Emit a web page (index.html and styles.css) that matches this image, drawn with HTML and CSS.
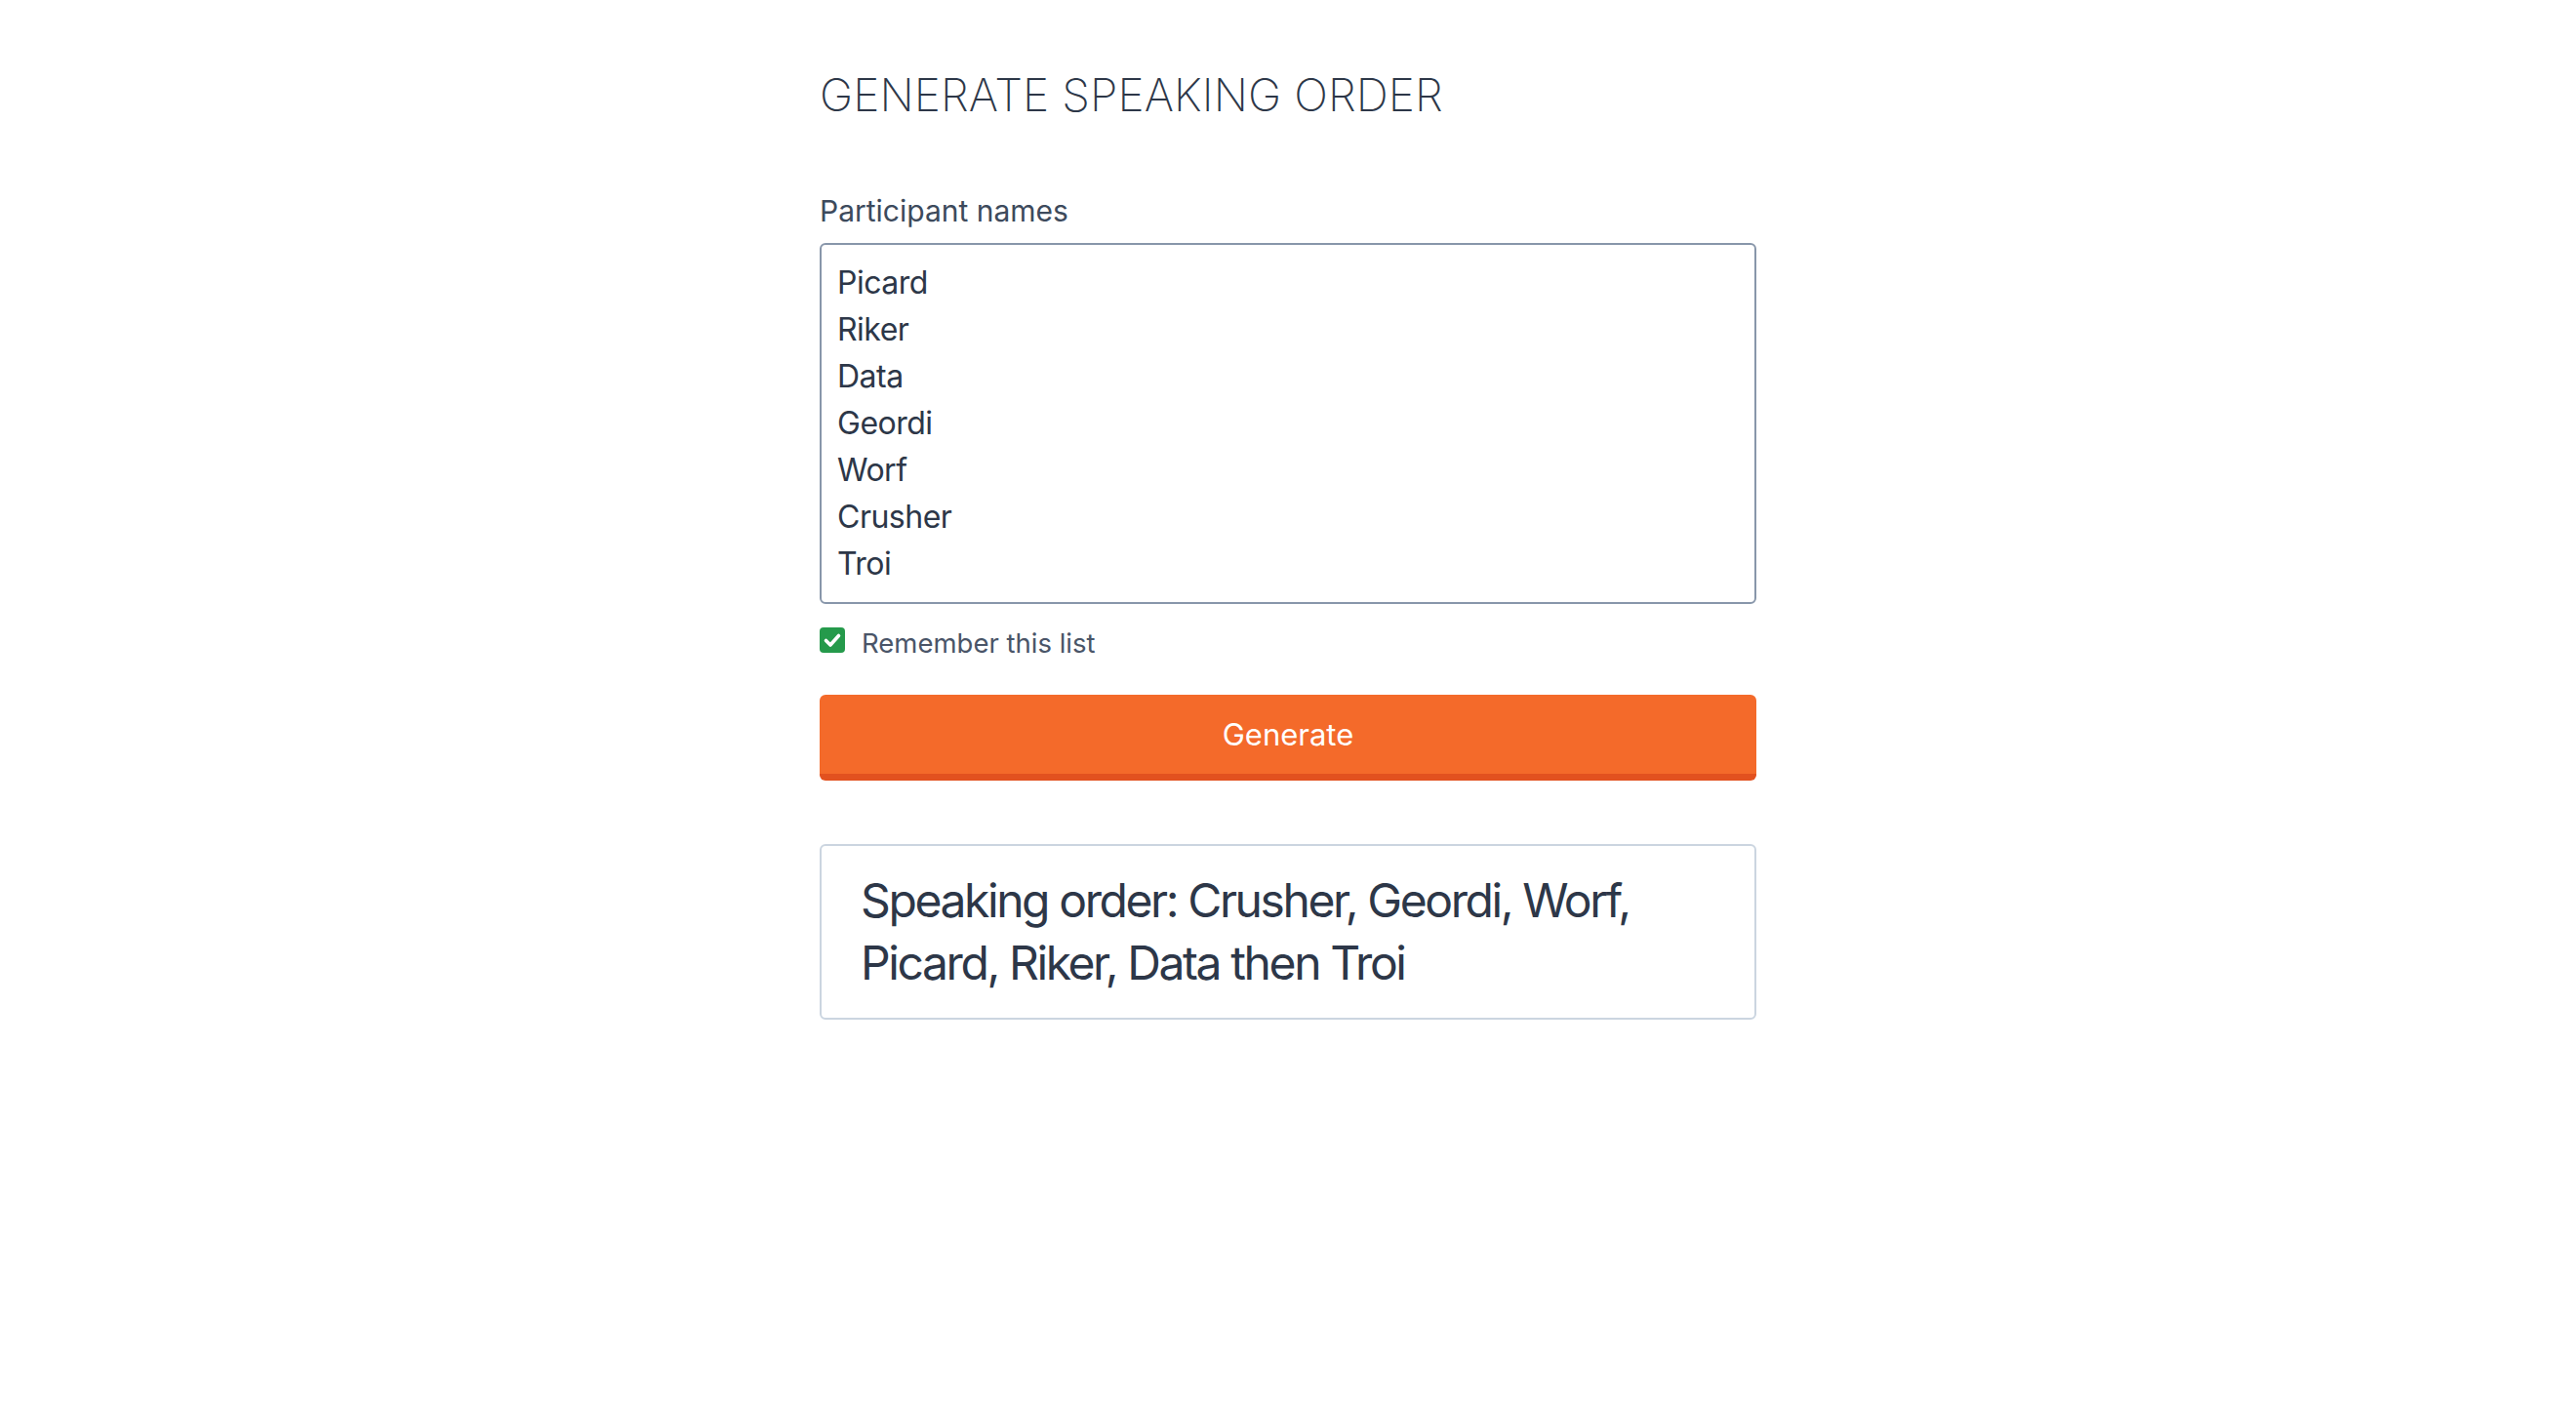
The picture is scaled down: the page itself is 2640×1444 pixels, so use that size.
FILE: index.html
```html
<!DOCTYPE html>
<html lang="en">
<head>
<meta charset="utf-8">
<title>Generate speaking order</title>
<link rel="stylesheet" href="styles.css">
</head>
<body>
<main class="page">
  <h1 class="title">GENERATE SPEAKING ORDER</h1>
  <form class="form">
    <label class="field-label" for="names">Participant names</label>
    <textarea id="names" class="names">Picard
Riker
Data
Geordi
Worf
Crusher
Troi</textarea>
    <label class="remember">
      <span class="checkbox" aria-hidden="true">
        <svg viewBox="0 0 26 26" width="26" height="26">
          <rect x="0" y="0" width="26" height="26" rx="4" fill="#259a4b"/>
          <path d="M6.5 13.5 L11 18 L19.5 8.5" fill="none" stroke="#fff" stroke-width="3.6" stroke-linecap="round" stroke-linejoin="round"/>
        </svg>
      </span>
      <span class="remember-text">Remember this list</span>
    </label>
    <button type="button" class="generate">Generate</button>
  </form>
  <div class="result">Speaking order: Crusher, Geordi, Worf, Picard, Riker, Data then Troi</div>
</main>
</body>
</html>
```
FILE: styles.css
```css
html, body {
  margin: 0;
  padding: 0;
  background: #ffffff;
}

body {
  font-family: Inter, "Noto Sans", "Liberation Sans", sans-serif;
  color: #2d3748;
}

.page {
  width: 960px;
  margin: 0 auto;
  padding-top: 68px;
}

.title {
  margin: 0 0 72px;
  font-size: 46px;
  line-height: 58px;
  font-weight: 200;
  color: #2d3748;
  letter-spacing: 0.1px;
}

.form {
  display: flex;
  flex-direction: column;
}

.field-label {
  display: block;
  font-size: 30px;
  line-height: 36px;
  color: #3d4a5c;
  margin-bottom: 14.5px;
}

.names {
  box-sizing: border-box;
  width: 100%;
  height: 370px;
  margin: 0;
  padding: 15px 16px;
  border: 2px solid #8896aa;
  border-radius: 6px;
  font-family: inherit;
  font-size: 32px;
  line-height: 48px;
  letter-spacing: -0.5px;
  color: #2d3748;
  resize: none;
  overflow: hidden;
  background: #fff;
}

.remember {
  display: flex;
  align-items: flex-start;
  gap: 17px;
  margin-top: 24px;
  font-size: 27.5px;
  line-height: 32px;
  color: #4a5568;
}

.checkbox {
  display: block;
  width: 26px;
  height: 26px;
  flex: none;
}

.checkbox svg {
  display: block;
}

.generate {
  box-sizing: border-box;
  width: 100%;
  height: 88px;
  margin-top: 37px;
  padding: 0;
  border: none;
  border-bottom: 7px solid #e2511f;
  border-radius: 6px;
  background: #f46a2a;
  color: #ffffff;
  font-family: inherit;
  font-size: 31px;
  cursor: pointer;
}

.result {
  margin-top: 65px;
  padding: 24px 40px;
  border: 2px solid #cbd5e0;
  border-radius: 6px;
  font-size: 48px;
  line-height: 64px;
  letter-spacing: -2.4px;
  color: #2d3748;
}
```
